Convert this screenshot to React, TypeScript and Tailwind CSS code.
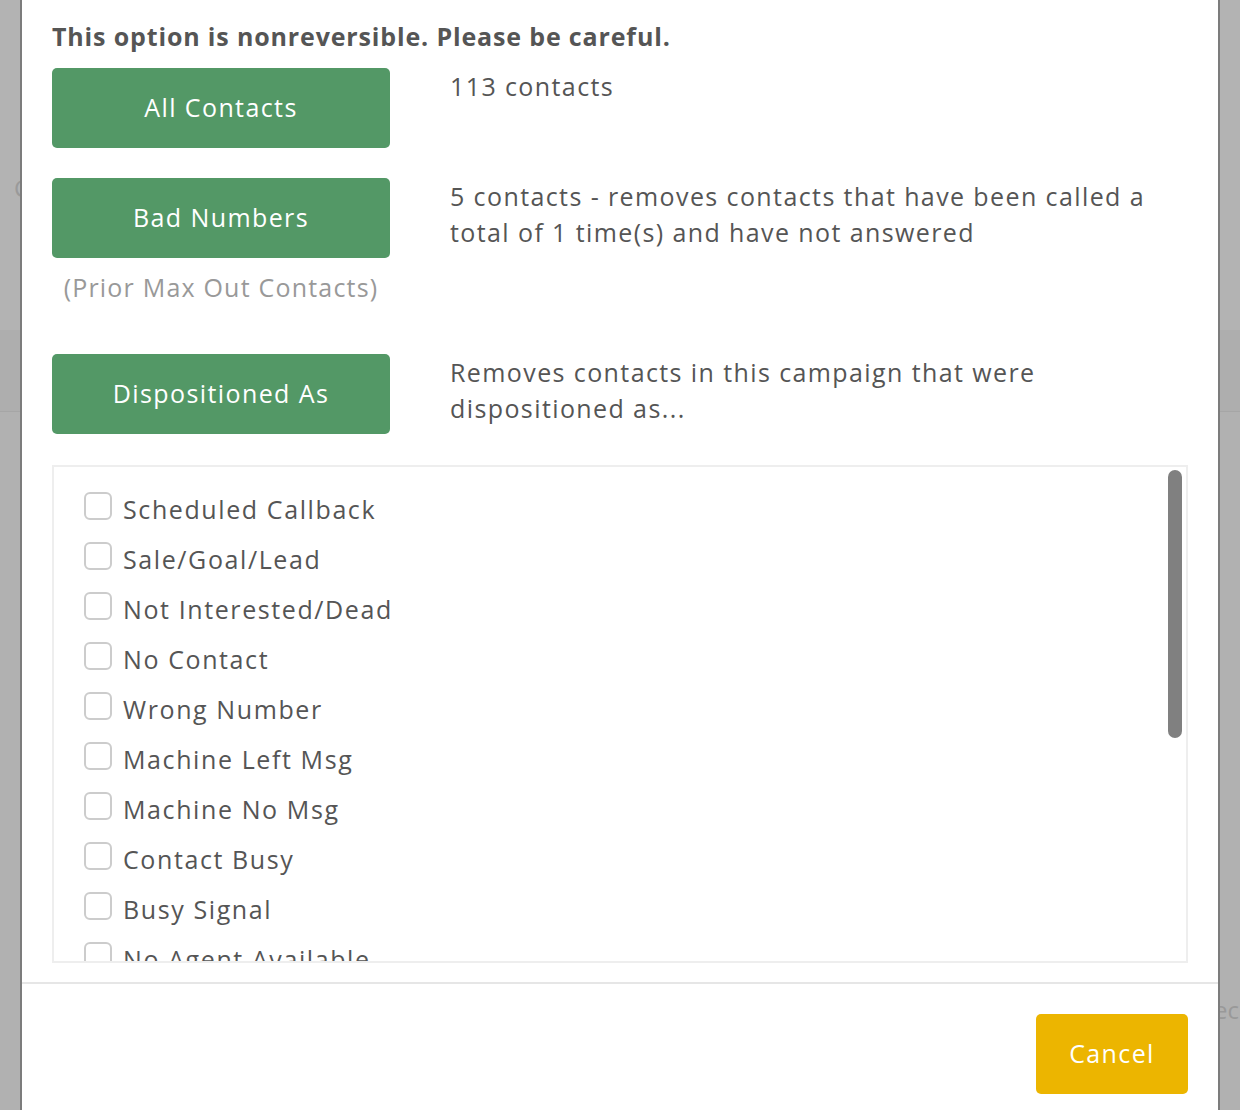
import React from "react";

const items = [
  "Scheduled Callback",
  "Sale/Goal/Lead",
  "Not Interested/Dead",
  "No Contact",
  "Wrong Number",
  "Machine Left Msg",
  "Machine No Msg",
  "Contact Busy",
  "Busy Signal",
  "No Agent Available",
  "Dropped Call",
  "Do Not Call",
];

function GreenButton({ label }: { label: string }) {
  return (
    <button className="w-[338px] h-[80px] rounded-[5px] bg-[#539866] text-white text-[25px] tracking-[1.4px] flex items-center justify-center">
      {label}
    </button>
  );
}

export default function App() {
  return (
    <div
      className="w-[1240px] h-[1110px] overflow-hidden flex bg-[#b3b3b3] text-[#555555]"
      style={{ fontFamily: '"Open Sans", "Liberation Sans", sans-serif' }}
    >
      {/* left page strip */}
      <div className="w-[20px] h-full flex flex-col overflow-hidden">
        <div className="h-[330px] bg-[#b3b3b3] relative">
          <span className="absolute left-[14px] top-[170px] text-[24px] text-[#9a9a9a]">C</span>
        </div>
        <div className="h-[82px] bg-[#aeaeae] border-b border-[#a6a6a6]"></div>
        <div className="flex-1 bg-[#b1b1b1]"></div>
      </div>

      {/* modal */}
      <div className="w-[1200px] h-full bg-white border-x-2 border-[#7c7c7c] flex flex-col">
        <div className="px-[30px] flex flex-col">
          <h2 className="pt-[21px] leading-[30px] text-[25px] font-bold text-[#555555] tracking-[0.85px]">
            This option is nonreversible. Please be careful.
          </h2>

          {/* row 1 */}
          <div className="mt-[17px] flex gap-[60px]">
            <GreenButton label="All Contacts" />
            <p className="text-[25px] leading-[36px] tracking-[1.4px]">113 contacts</p>
          </div>

          {/* row 2 */}
          <div className="mt-[30px] flex gap-[60px]">
            <div className="flex flex-col">
              <GreenButton label="Bad Numbers" />
              <p className="mt-[11px] text-center text-[25px] leading-[36px] text-[#999999] tracking-[1.2px]">
                (Prior Max Out Contacts)
              </p>
            </div>
            <p className="w-[720px] text-[25px] leading-[36px] tracking-[1.4px]">
              5 contacts - removes contacts that have been called a total of 1 time(s) and have not answered
            </p>
          </div>

          {/* row 3 */}
          <div className="mt-[49px] flex gap-[60px]">
            <GreenButton label="Dispositioned As" />
            <p className="w-[640px] text-[25px] leading-[36px] tracking-[1.4px]">
              Removes contacts in this campaign that were dispositioned as...
            </p>
          </div>

          {/* list */}
          <div className="mt-[31px] h-[498px] border-2 border-[#eeeeee] relative overflow-hidden">
            <ul className="pt-[25px] pl-[30px] flex flex-col">
              {items.map((it) => (
                <li key={it} className="h-[50px] flex items-start gap-[11px]">
                  <span className="w-[28px] h-[28px] shrink-0 rounded-[6px] border-2 border-[#cccccc] bg-white"></span>
                  <span className="text-[25px] leading-[34px] tracking-[1.6px] text-[#555555]">{it}</span>
                </li>
              ))}
            </ul>
            <div className="absolute right-[4px] top-[3px] w-[14px] h-[268px] rounded-full bg-[#808080]"></div>
          </div>
        </div>

        {/* footer */}
        <div className="mt-[19px] border-t-2 border-[#e6e6e6] px-[30px] pt-[30px] flex justify-end">
          <button className="w-[152px] h-[80px] rounded-[5px] bg-[#ecb500] text-white text-[25px] tracking-[1.4px] flex items-center justify-center">
            Cancel
          </button>
        </div>
      </div>

      {/* right page strip */}
      <div className="flex-1 h-full flex flex-col overflow-hidden">
        <div className="h-[330px] bg-[#b3b3b3]"></div>
        <div className="h-[82px] bg-[#aeaeae] border-b border-[#a6a6a6]"></div>
        <div className="flex-1 bg-[#b1b1b1] relative">
          <span className="absolute left-[-6px] top-[580px] text-[24px] text-[#999999]">ec</span>
        </div>
      </div>
    </div>
  );
}
